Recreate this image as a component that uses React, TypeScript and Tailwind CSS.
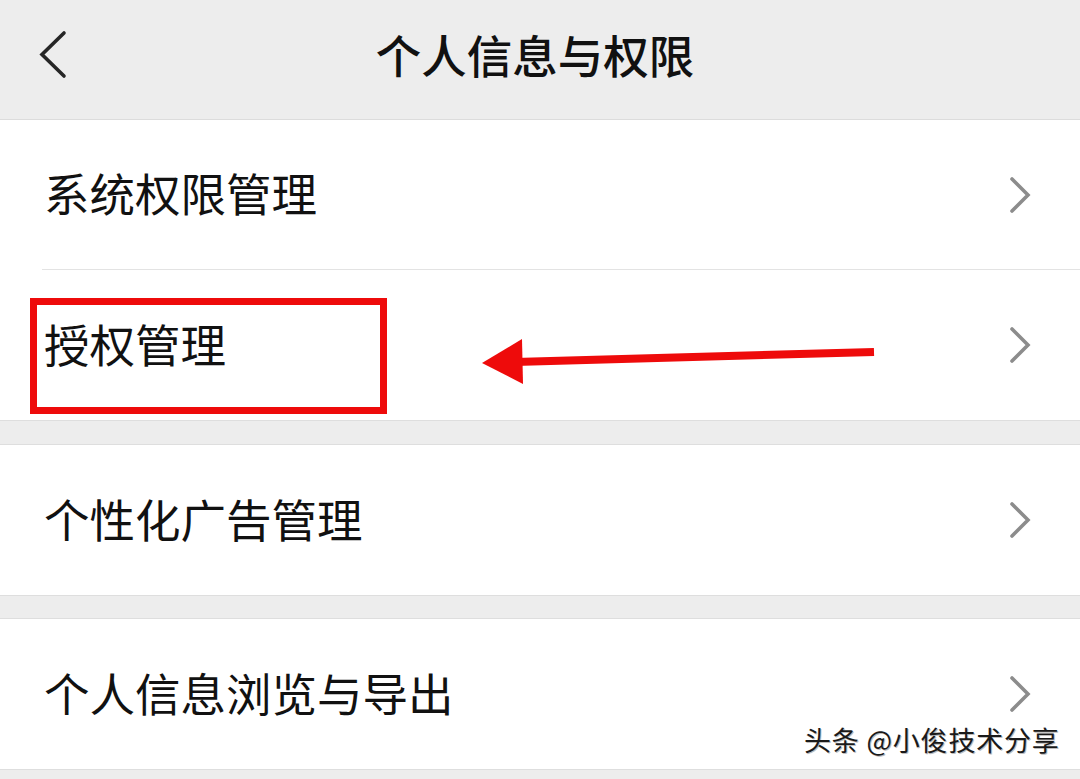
import React from "react";

const font = { fontFamily: '"Noto Sans CJK SC", "Noto Sans", sans-serif' };

function Chevron() {
  return (
    <svg width="24" height="40" viewBox="0 0 24 40" className="shrink-0">
      <polyline
        points="3,4 19,20 3,36"
        fill="none"
        stroke="#8c8c8c"
        strokeWidth="3.6"
        strokeLinecap="round"
        strokeLinejoin="miter"
      />
    </svg>
  );
}

function Row({ label, h = "h-[150px]" }: { label: string; h?: string }) {
  return (
    <div className={`${h} flex items-center justify-between pl-[44px] pr-[47px] bg-white`}>
      <span className="text-[45.5px] leading-none text-[#111111] -mt-[3px]">{label}</span>
      <Chevron />
    </div>
  );
}

export default function App() {
  return (
    <div className="relative w-[1080px] h-[779px] bg-[#ededed] overflow-hidden" style={font}>
      {/* header */}
      <div className="relative h-[120px] flex items-center justify-center border-b border-[#dcdcdc] bg-[#ededed]">
        <div className="absolute left-[38px] top-[30px]">
          <svg width="32" height="50" viewBox="0 0 32 50">
            <polyline
              points="26,3 4,24.5 26,46"
              fill="none"
              stroke="#262626"
              strokeWidth="3.6"
              strokeLinecap="round"
              strokeLinejoin="miter"
            />
          </svg>
        </div>
        <span className="text-[45.5px] leading-none font-medium text-[#111111] -mt-[10px] ml-[-10px]">个人信息与权限</span>
      </div>

      {/* section 1 */}
      <div className="bg-white">
        <Row label="系统权限管理" h="h-[149px]" />
        <div className="ml-[42px] h-px bg-[#e3e3e3]" />
        <Row label="授权管理" />
      </div>
      <div className="h-[25px] border-y border-[#dedede] bg-[#ededed]" />

      <Row label="个性化广告管理" />
      <div className="h-[24px] border-y border-[#dedede] bg-[#ededed]" />

      <Row label="个人信息浏览与导出" />
      <div className="border-t border-[#dedede]" />

      {/* annotation: red box */}
      <div className="absolute left-[30px] top-[298px] w-[357px] h-[116px] border-[7px] border-[#ee0b0b]" />

      {/* annotation: arrow */}
      <svg className="absolute left-0 top-0" width="1080" height="779" viewBox="0 0 1080 779">
        <line x1="515" y1="362" x2="874" y2="352" stroke="#ee0b0b" strokeWidth="8" />
        <polygon points="482,363 522,339 523,384" fill="#ee0b0b" />
      </svg>

      {/* watermark */}
      <div
        className="absolute left-[804px] top-[726px] text-[27px] leading-none text-[#1a1a1a] whitespace-nowrap tracking-[0.8px]"
        style={{ textShadow: "1px 1px 0 #bdbdbd, -1px 0 0 #ffffff" }}
      >
        头条 @小俊技术分享
      </div>
    </div>
  );
}
